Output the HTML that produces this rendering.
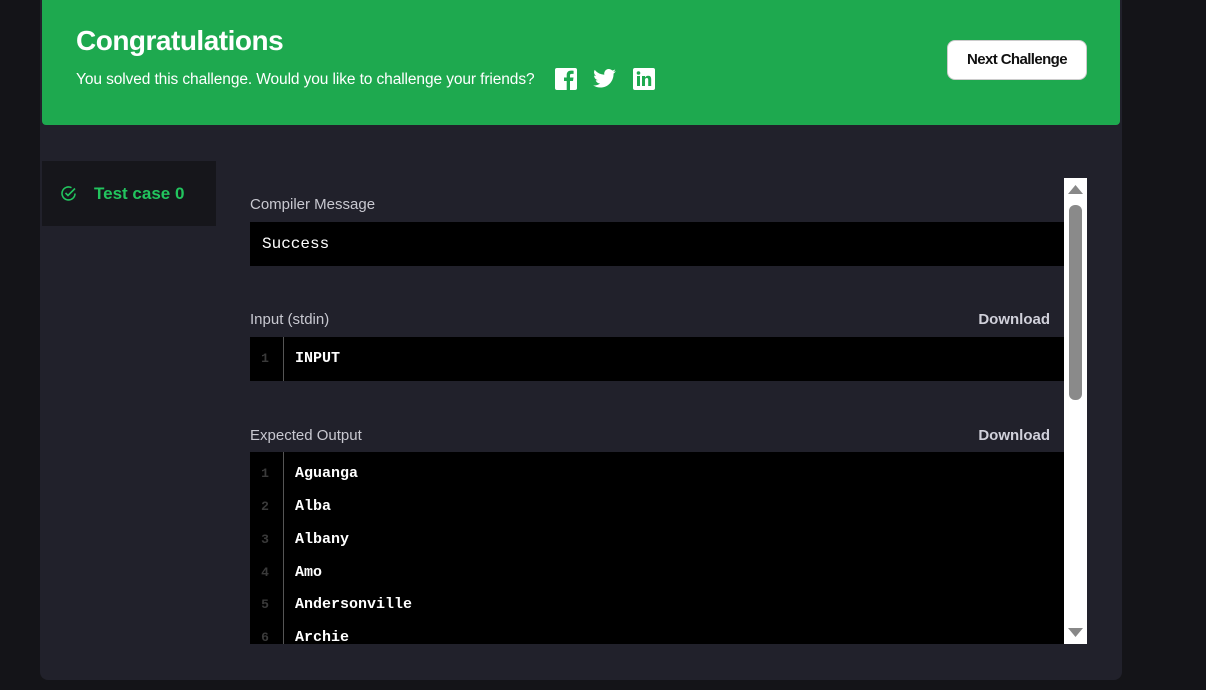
<!DOCTYPE html>
<html><head><style>
*{margin:0;padding:0;box-sizing:border-box}
body{width:1206px;height:690px;background:#141418;font-family:"Liberation Sans",sans-serif;position:relative;overflow:hidden}
.panel{position:absolute;left:40px;top:0;width:1082px;height:680px;background:#21212b;border-radius:0 0 8px 8px}
.banner{position:absolute;left:42px;top:0;width:1078px;height:125px;background:#1ea94f;border-radius:0 0 4px 4px}
.banner h1{position:absolute;left:34px;top:25px;color:#fff;font-size:28px;font-weight:bold;letter-spacing:-0.5px}
.banner p{position:absolute;left:34px;top:71px;color:#fff;font-size:15.5px;letter-spacing:-0.1px}
.btn{position:absolute;left:905px;top:40px;width:140px;height:40px;background:#fff;border-radius:8px;border:1px solid #ccc;color:#111;font-size:15px;font-weight:bold;text-align:center;line-height:38px;letter-spacing:-0.6px}
.tc{position:absolute;left:42px;top:161px;width:174px;height:65px;background:#16161b;color:#22c45e;font-weight:bold;font-size:17px}
.lbl{position:absolute;left:250px;color:#c8c8d0;font-size:15px}
.dl{position:absolute;right:156px;color:#d0d0da;font-size:15px;font-weight:bold}
.blk{position:absolute;left:250px;width:814px;background:#000}
.mono{font-family:"Liberation Mono","DejaVu Sans Mono",monospace;color:#fff;font-weight:bold;font-size:15px}
.ln{position:absolute;left:0;width:34px;border-right:1px solid #555;top:0;bottom:0}
.row{position:absolute;left:0;height:33px;line-height:33px;width:100%}
.row .n{position:absolute;left:0;width:30px;text-align:center;color:#3a3a3a;font-size:13px}
.row .t{position:absolute;left:45px}
.sb{position:absolute;left:1064px;top:178px;width:23px;height:466px;background:#fff}
</style></head><body>
<div class="panel"></div>
<div class="banner">
<h1>Congratulations</h1>
<p>You solved this challenge. Would you like to challenge your friends?</p>
<svg style="position:absolute;left:513px;top:68px" width="22" height="22" viewBox="0 0 22 22"><rect width="22" height="22" rx="2" fill="#fff"/><path d="M15 22V13h3l.5-3.5H15V7.5c0-1 .3-1.6 1.7-1.6H18.6V2.8C18 2.7 17 2.6 16 2.6c-2.7 0-4.3 1.6-4.3 4.4v2.5H9V13h2.7v9z" fill="#1ea94f"/></svg>
<svg style="position:absolute;left:551px;top:69px" width="23" height="19" viewBox="0 0 24 20"><path d="M24 2.3a10 10 0 0 1-2.8.8A5 5 0 0 0 23.3.4a10 10 0 0 1-3.1 1.2A4.9 4.9 0 0 0 11.8 6 14 14 0 0 1 1.7.9a4.9 4.9 0 0 0 1.5 6.6A4.9 4.9 0 0 1 1 6.9a4.9 4.9 0 0 0 3.9 4.8 5 5 0 0 1-2.2.1 4.9 4.9 0 0 0 4.6 3.4A9.9 9.9 0 0 1 0 17.3 14 14 0 0 0 7.5 19.5c9.1 0 14-7.5 14-14v-.6A10 10 0 0 0 24 2.3z" fill="#fff"/></svg>
<svg style="position:absolute;left:591px;top:68px" width="22" height="22" viewBox="0 0 22 22"><rect width="22" height="22" rx="2" fill="#fff"/><rect x="4" y="8" width="3" height="10" fill="#1ea94f"/><circle cx="5.5" cy="5" r="1.8" fill="#1ea94f"/><path d="M9 8h3v1.5c.6-1 1.7-1.8 3.2-1.8 2.5 0 3 1.6 3 3.8V18h-3v-6c0-1.2-.3-2-1.4-2-1.3 0-1.8.9-1.8 2.2V18H9z" fill="#1ea94f"/></svg>
<div class="btn">Next Challenge</div>
</div>
<div class="tc">
<svg style="position:absolute;left:18px;top:24px" width="17" height="17" viewBox="0 0 17 17" fill="none" stroke="#22c45e" stroke-width="1.6"><path d="M15 8.5A6.5 6.5 0 1 1 11.5 2.7"/><path d="M5.5 8l2.5 2.5L15 3.5"/></svg>
<span style="position:absolute;left:52px;top:23px">Test case 0</span>
</div>
<div class="lbl" style="top:196px">Compiler Message</div>
<div class="blk mono" style="top:222px;height:44px;line-height:44px;padding-left:12px;font-weight:normal;font-size:16px">Success</div>
<div class="lbl" style="top:311px">Input (stdin)</div>
<div class="dl" style="top:311px">Download</div>
<div class="blk mono" style="top:337px;height:44px"><div class="ln"></div><div class="row" style="top:5px"><span class="n">1</span><span class="t">INPUT</span></div></div>
<div class="lbl" style="top:427px">Expected Output</div>
<div class="dl" style="top:427px">Download</div>
<div class="blk mono" style="top:452px;height:192px;overflow:hidden"><div class="ln"></div>
<div class="row" style="top:5px"><span class="n">1</span><span class="t">Aguanga</span></div>
<div class="row" style="top:38px"><span class="n">2</span><span class="t">Alba</span></div>
<div class="row" style="top:71px"><span class="n">3</span><span class="t">Albany</span></div>
<div class="row" style="top:104px"><span class="n">4</span><span class="t">Amo</span></div>
<div class="row" style="top:136px"><span class="n">5</span><span class="t">Andersonville</span></div>
<div class="row" style="top:169px"><span class="n">6</span><span class="t">Archie</span></div>
</div>
<div class="sb">
<svg style="position:absolute;left:4px;top:6px" width="15" height="10"><path d="M0 10L7.5 1L15 10z" fill="#888"/></svg>
<div style="position:absolute;left:5px;top:27px;width:13px;height:195px;background:#8a8a8a;border-radius:6px"></div>
<svg style="position:absolute;left:4px;top:450px" width="15" height="10"><path d="M0 0L7.5 9L15 0z" fill="#888"/></svg>
</div>
</body></html>
